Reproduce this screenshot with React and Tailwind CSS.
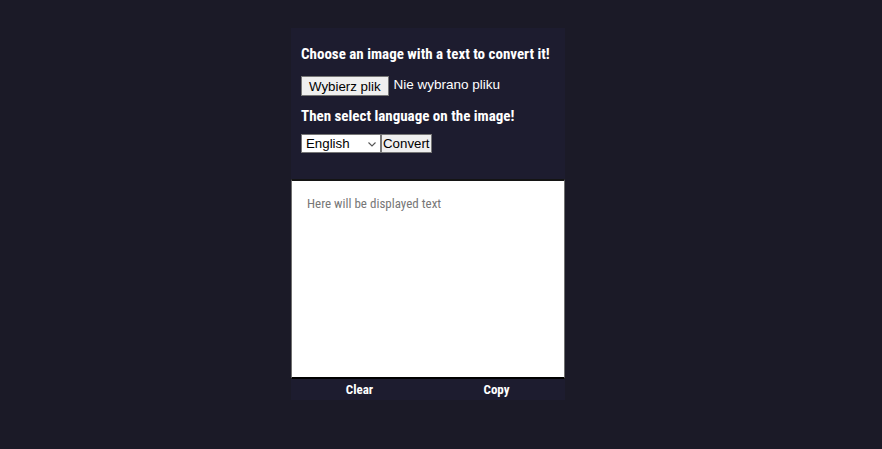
export default function App() {
  const head = { fontFamily: '"Liberation Sans Narrow", "Roboto Condensed", Roboto, sans-serif' };
  const ui = { fontFamily: '"Liberation Sans", Arial, sans-serif' };

  return (
    <div className="min-h-[449px] bg-[#1b1a27] pl-[291px] pt-[28px]">
      <div className="w-[274px] bg-[#1d1c2f]" style={head}>
        <div className="px-[10px] pt-[16px] pb-[26px]">
          <p className="text-[15px] font-bold leading-[20px] text-white">
            Choose an image with a text to convert it!
          </p>
          <div className="mt-[11px] flex h-[21px] items-center gap-[5px]" style={ui}>
            <button className="h-[20px] border border-[#767676] bg-[#efefef] px-[7px] text-[13.3px] text-black">
              Wybierz plik
            </button>
            <span className="text-[13.5px] text-white">Nie wybrano pliku</span>
          </div>
          <p className="mt-[10px] text-[15px] font-bold leading-[20px] text-white">
            Then select language on the image!
          </p>
          <div className="mt-[8px] flex items-center" style={ui}>
            <div className="flex h-[19px] w-[80px] items-center justify-between border border-[#767676] bg-white pl-[4px] pr-[3px] text-[13.3px] text-black">
              <span>English</span>
              <svg width="10" height="10" viewBox="0 0 10 10" fill="none" stroke="#555" strokeWidth="1.1">
                <path d="M1.5 3.5 L5 7 L8.5 3.5" />
              </svg>
            </div>
            <button className="h-[19px] border border-[#767676] bg-[#efefef] px-[1px] text-[13.3px] leading-[17px] text-black">
              Convert
            </button>
          </div>
        </div>
        <div className="h-[200px] border-x border-t-2 border-b-2 border-x-[#6f6f6f] border-t-[#141414] border-b-black bg-white px-[15px] py-[13px]">
          <p className="text-[13px] leading-[20px] text-[#777]">Here will be displayed text</p>
        </div>
        <div className="grid h-[21px] grid-cols-2 text-[13px] font-bold text-white">
          <button className="text-center">Clear</button>
          <button className="text-center">Copy</button>
        </div>
      </div>
    </div>
  );
}
